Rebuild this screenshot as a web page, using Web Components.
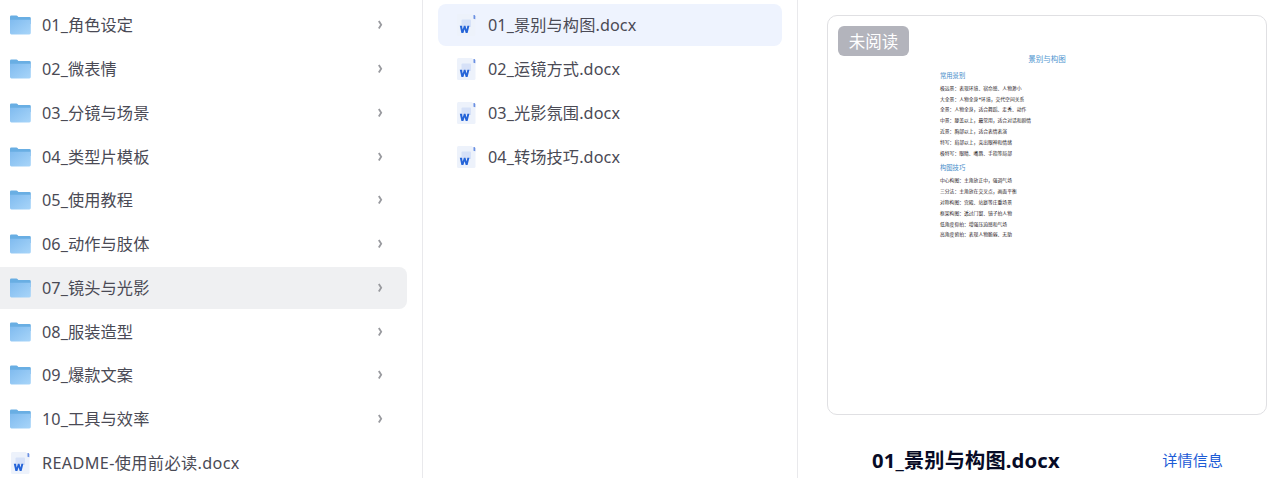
<!DOCTYPE html>
<html lang="zh-CN">
<head>
<meta charset="utf-8">
<title>01_景别与构图.docx</title>
<style>
  body {
    margin: 0;
    background: #fff;
    color: #4a4a55;
    font-family: "Noto Sans", "Noto Sans CJK SC", sans-serif;
    overflow: hidden;
  }
  .readme { --tracking: 0.37px; }
</style>
</head>
<body>

<template id="file-browser">
  <style>
    :host { display: grid; grid-template-columns: 423px 375px 478px; height: 478px; }
    ::slotted(file-list) { border-right: 1px solid #e9e9ec; }
  </style>
  <slot></slot>
</template>

<template id="file-list">
  <style>
    :host {
      display: flex;
      flex-direction: column;
      gap: 1.76px;
      padding-top: 4.4px;
      height: 473.6px;
      overflow: hidden;
    }
    :host([inset]) { padding-left: 15px; }
  </style>
  <slot></slot>
</template>

<template id="file-row">
  <style>
    :host {
      display: flex;
      align-items: center;
      flex: none;
      box-sizing: border-box;
      width: 407px;
      height: 42px;
      padding: 0 21px 0 9px;
      border-radius: 0 8px 8px 0;
      font-size: 16.2px;
      line-height: 24px;
    }
    :host([kind="nested"]) { width: 344px; padding-left: 17px; border-radius: 8px; }
    :host([selected]) { background: #eff0f2; }
    :host([kind="nested"][selected]) { background: #eef3fe; }
    .name { margin-left: 11px; white-space: nowrap; letter-spacing: var(--tracking, 0.1px); }
    .chevron { display: none; margin-left: auto; }
    :host([folder]) .chevron { display: block; }
  </style>
  <file-icon></file-icon>
  <span class="name"><slot></slot></span>
  <svg class="chevron" width="10" height="12" viewBox="0 0 10 12" fill="none" stroke="#999a9f" stroke-width="1.8">
    <path d="M2.8 2 L5.200 5.800 L2.8 9.600"/>
  </svg>
</template>

<template id="file-icon">
  <style>
    :host { display: block; width: 22px; height: 22px; }
    svg { display: none; }
    :host([type="folder"]) .folder, :host([type="word"]) .word { display: block; }
  </style>
  <svg class="folder" width="22" height="22" viewBox="0 0 22 22">
    <defs>
      <linearGradient id="front" x1="0" y1="0" x2="1" y2="1">
        <stop offset="0" stop-color="#80bbef"/>
        <stop offset="1" stop-color="#a8d5f9"/>
      </linearGradient>
    </defs>
    <path fill="#69aee3" d="M1 2.800q0-1.300 1.300-1.300h5.200q.6 0 1 .5l.8 1h11.200q1.300 0 1.300 1.300V10H1z"/>
    <path fill="url(#front)" d="M1 5.800h20.800v13.300q0 1.400-1.400 1.400H2.400Q1 20.500 1 19.100z"/>
  </svg>
  <svg class="word" width="22" height="22" viewBox="0 0 22 22">
    <path fill="#edf2fb" d="M3.500 0h13.200L20.500 3.500V20.500q0 1.500-1.500 1.500H3.500Q2 22 2 20.500V1.500Q2 0 3.500 0z"/>
    <path fill="#d6e1f8" d="M7.500 5.500h7.500q1 0 1 1V13H6.500V6.500q0-1 1-1z"/>
    <path fill="#6a8fe2" d="M18.500 1h.5q1.300 0 1.300 1.300v3L18.500 4.800z"/>
    <path fill="#2564d8" d="M4.800 11.800h2.200l.7 3.700 1.200-3.700h1.600l1 3.700.9-3.700h2l-1.800 7.200h-1.900l-1.100-3.700L8.400 19H6.400z"/>
  </svg>
</template>

<template id="preview-pane">
  <style>
    :host { display: flex; flex-direction: column; padding: 15px 9px 0 29px; }
    .page {
      box-sizing: border-box;
      width: 440px;
      height: 400px;
      position: relative;
      padding: 36.8px 0 0 112px;
      border: 1px solid #e0e0e3;
      border-radius: 10px;
    }
    .badge {
      position: absolute;
      left: 10px;
      top: 10px;
      width: 71px;
      height: 30px;
      border-radius: 6px;
      background: #b3b4bc;
      color: #fff;
      font-size: 16.5px;
      line-height: 31px;
      text-align: center;
    }
    footer {
      display: flex;
      align-items: center;
      justify-content: space-between;
      height: 32px;
      margin-top: 29px;
      padding: 0 44px 0 45px;
    }
    h1 { margin: 0; color: #070b26; font-size: 20.2px; line-height: 30px; font-weight: 700; letter-spacing: 0.18px; }
    a { color: #1c5bd6; font-size: 15.2px; line-height: 22px; text-decoration: none; }
  </style>
  <div class="page">
    <span class="badge"><slot name="badge"></slot></span>
    <slot></slot>
  </div>
  <footer>
    <h1><slot name="title"></slot></h1>
    <a href="#"><slot name="link"></slot></a>
  </footer>
</template>

<template id="doc-page">
  <style>
    :host { display: block; width: 214px; color: #1f2024; font-size: 4.8px; line-height: 10.8px; white-space: nowrap; }
    h2, h3, p { margin: 0; font-weight: 400; }
    h2 { color: #4d94cf; font-size: 7.5px; line-height: 12px; text-align: center; }
    h3 { color: #3f8bc9; font-size: 6.3px; line-height: 12px; margin: 5px 0 1px; }
    p + h3 { margin-top: 4px; }
  </style>
</template>

<file-browser>
  <file-list>
    <file-row folder>01_角色设定</file-row>
    <file-row folder>02_微表情</file-row>
    <file-row folder>03_分镜与场景</file-row>
    <file-row folder>04_类型片模板</file-row>
    <file-row folder>05_使用教程</file-row>
    <file-row folder>06_动作与肢体</file-row>
    <file-row folder selected>07_镜头与光影</file-row>
    <file-row folder>08_服装造型</file-row>
    <file-row folder>09_爆款文案</file-row>
    <file-row folder>10_工具与效率</file-row>
    <file-row class="readme">README-使用前必读.docx</file-row>
  </file-list>
  <file-list inset>
    <file-row kind="nested" selected>01_景别与构图.docx</file-row>
    <file-row kind="nested">02_运镜方式.docx</file-row>
    <file-row kind="nested">03_光影氛围.docx</file-row>
    <file-row kind="nested">04_转场技巧.docx</file-row>
  </file-list>
  <preview-pane>
    <span slot="badge">未阅读</span>
    <doc-page></doc-page>
    <span slot="title">01_景别与构图.docx</span>
    <span slot="link">详情信息</span>
  </preview-pane>
</file-browser>

<script>
  (function() {
    const DOC = [
      ['h2', '景别与构图'],
      ['h3', '常用景别'],
      ['p', '极远景：表现环境、宿命感、人物渺小'],
      ['p', '大全景：人物全身+环境，交代空间关系'],
      ['p', '全景：人物全身，适合舞蹈、走秀、动作'],
      ['p', '中景：膝盖以上，最常用，适合对话和剧情'],
      ['p', '近景：胸部以上，适合表情表演'],
      ['p', '特写：肩部以上，突出眼神和情绪'],
      ['p', '极特写：眼睛、嘴唇、手指等局部'],
      ['h3', '构图技巧'],
      ['p', '中心构图：主角放正中，强调气场'],
      ['p', '三分法：主角放在交叉点，画面平衡'],
      ['p', '对称构图：宫殿、站庭等庄重场景'],
      ['p', '框架构图：透过门窗、镜子拍人物'],
      ['p', '低角度仰拍：增强压迫感和气场'],
      ['p', '高角度俯拍：表现人物脆弱、无助']
    ];

    class TemplateElement extends HTMLElement {
      constructor() {
        super();
        const template = document.getElementById(this.localName);
        this.attachShadow({ mode: 'open' }).appendChild(template.content.cloneNode(true));
      }
    }

    class FileBrowser extends TemplateElement {}
    class FileList extends TemplateElement {}
    class FileIcon extends TemplateElement {}
    class PreviewPane extends TemplateElement {}

    class FileRow extends TemplateElement {
      connectedCallback() {
        const type = this.hasAttribute('folder') ? 'folder' : 'word';
        this.shadowRoot.querySelector('file-icon').setAttribute('type', type);
      }
    }

    class DocPage extends TemplateElement {
      connectedCallback() {
        DOC.forEach(([tag, text]) => {
          const line = document.createElement(tag);
          line.textContent = text;
          this.shadowRoot.appendChild(line);
        });
      }
    }

    customElements.define('file-icon', FileIcon);
    customElements.define('file-row', FileRow);
    customElements.define('file-list', FileList);
    customElements.define('doc-page', DocPage);
    customElements.define('preview-pane', PreviewPane);
    customElements.define('file-browser', FileBrowser);
  })();
</script>
</body>
</html>
